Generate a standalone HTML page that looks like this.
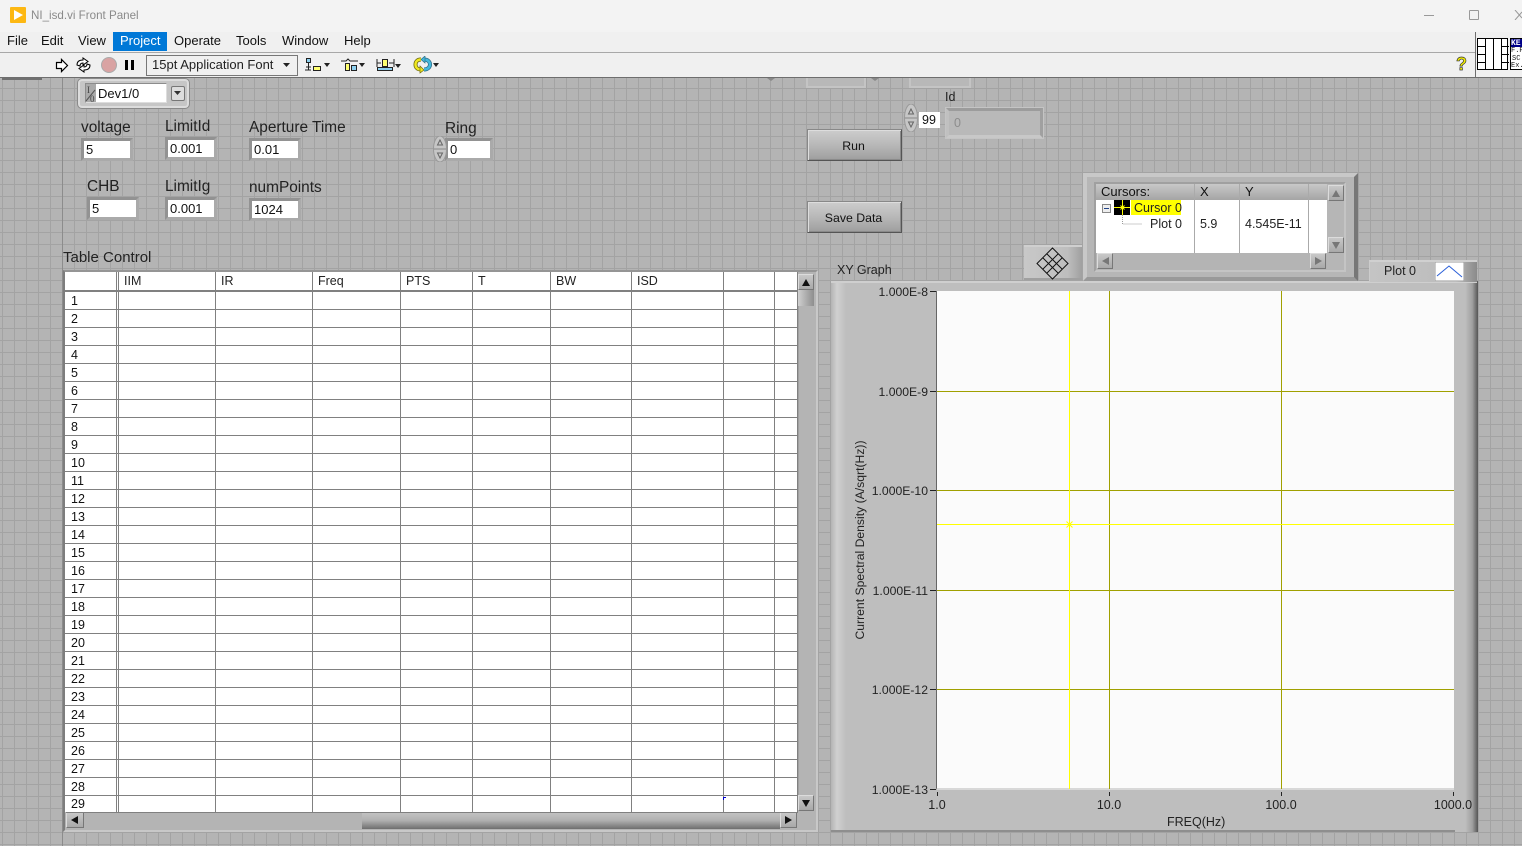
<!DOCTYPE html>
<html><head><meta charset="utf-8"><style>
html,body{margin:0;padding:0}
body{width:1522px;height:846px;overflow:hidden;position:relative;background:#b4b4b4;font-family:"Liberation Sans",sans-serif;color:#1a1a1a}
div,span,svg{position:absolute;box-sizing:border-box}
.t{white-space:nowrap;line-height:1}
.m{font-size:13px;top:34px;color:#111}
.l{font-size:15.4px;color:#222}
.f{background:#fff;border:0;font-size:13px;line-height:17px;padding-left:2px;color:#111}
.o{background:#b4b4b4;border:3px solid;border-color:#929292 #aaaaaa #aaaaaa #929292}
.c{font-size:12.5px;top:275px;color:#222}
.r{font-size:12.5px;left:71px;color:#111;white-space:nowrap;line-height:1}
.v{top:272px;width:1px;height:540px;background:#808080}
.y{font-size:12.2px;right:594px;white-space:nowrap;line-height:1;color:#222}
.x{font-size:12.5px;top:799px;width:60px;text-align:center;line-height:1;color:#222}
.b{background:linear-gradient(#c8c8c8,#a8a8a8);border:1px solid;border-color:#dcdcdc #777 #777 #dcdcdc}
.btn{background:linear-gradient(#cdcdcd,#b8b8b8 50%,#9e9e9e);border:1px solid #555;border-top-color:#888;border-left-color:#888;box-shadow:inset 1px 1px 0 #ddd,inset -1px -1px 0 #8a8a8a;font-size:12.3px;text-align:center;color:#111}
.h{background:linear-gradient(#c8c8c8,#a5a5a5);font-size:13px;line-height:16px;color:#111;padding-left:5px}
</style></head><body>
<div style="left:0;top:78px;width:1522px;height:768px;background-color:#b4b4b4;background-image:linear-gradient(90deg,#a3a3a3 1px,transparent 1px),linear-gradient(#a3a3a3 1px,transparent 1px);background-size:12px 12px;background-position:2px 10px"></div>
<div style="left:62px;top:78px;width:1px;height:768px;background:#8c8c8c"></div>

<!-- title bar -->
<div style="left:0;top:0;width:1522px;height:32px;background:#f3f3f3"></div>
<div style="left:0;top:32px;width:1522px;height:21px;background:#f0f0f0"></div>
<svg style="left:10px;top:7px" width="16" height="16"><rect width="16" height="16" rx="1" fill="#fdb813"/><path d="M4 3L13 8L4 13Z" fill="#fff"/></svg>
<span class="t" style="left:31px;top:10px;font-size:11.6px;color:#8a8a8a">NI_isd.vi Front Panel</span>
<div style="left:1424px;top:15px;width:10px;height:1px;background:#999"></div>
<div style="left:1469px;top:10px;width:10px;height:10px;border:1px solid #999;border-radius:1px"></div>
<svg style="left:1514px;top:10px" width="8" height="10"><path d="M1 0L8 8M1 10L8 2" stroke="#999" fill="none"/></svg>
<!-- menu -->
<div style="left:113px;top:32px;width:54px;height:19px;background:#0078d7"></div>
<span class="t m" style="left:7px">File</span>
<span class="t m" style="left:41px">Edit</span>
<span class="t m" style="left:78px">View</span>
<span class="t m" style="left:120px;color:#fff">Project</span>
<span class="t m" style="left:174px">Operate</span>
<span class="t m" style="left:236px">Tools</span>
<span class="t m" style="left:282px">Window</span>
<span class="t m" style="left:344px">Help</span>
<!-- toolbar -->
<div style="left:0;top:52px;width:1476px;height:1px;background:#a8a8a8"></div>
<div style="left:0;top:53px;width:1476px;height:24px;background:#f0f0f0"></div>
<div style="left:0;top:77px;width:1522px;height:1px;background:#6e6e6e"></div>
<div style="left:1476px;top:32px;width:46px;height:45px;background:#f0f0f0"></div>
<div style="left:1475px;top:32px;width:1px;height:46px;background:#6e6e6e"></div>
<div style="left:2px;top:78px;width:40px;height:2px;background:#707070"></div>
<svg style="left:55px;top:58px" width="14" height="15"><path d="M1.500 4.500H6.500V1.500L12.500 7.500L6.500 13.500V10.500H1.500Z" fill="#fff" stroke="#000" stroke-width="1.200"/></svg>
<svg style="left:75px;top:57px" width="17" height="16"><path d="M2 8C2 4 5 3 8 3V1L13 4.500L8 8V6C6 6 5 7 5 9Z" fill="#fff" stroke="#000"/><path d="M15 8C15 12 12 13 9 13V15L4 11.500L9 8V10C11 10 12 9 12 7Z" fill="#fff" stroke="#000"/></svg>
<div style="left:101px;top:57px;width:16px;height:16px;border-radius:50%;background:#d9a3a3;border:1.500px solid #aaa"></div>
<div style="left:125px;top:60px;width:3px;height:10px;background:#000"></div>
<div style="left:131px;top:60px;width:3px;height:10px;background:#000"></div>
<div style="left:146px;top:55px;width:152px;height:21px;border:1px solid #777;background:#f0f0f0"></div>
<span class="t" style="left:152px;top:58px;font-size:13px;color:#222">15pt Application Font</span>
<svg style="left:282px;top:62px" width="9" height="6"><path d="M1 1H8L4.500 5Z" fill="#222"/></svg>
<svg style="left:305px;top:57px" width="26" height="16"><rect x="1.500" y="1.500" width="4" height="4" fill="#8ed1f0" stroke="#222"/><path d="M3.500 6V13M1 10H6M0 13H6" stroke="#222"/><rect x="8.500" y="9.500" width="7" height="4" fill="#ffff70" stroke="#222"/><path d="M19 6H25L22 10Z" fill="#222"/></svg>
<svg style="left:340px;top:57px" width="26" height="16"><path d="M1 4H6L8 2L10 4H18" stroke="#222" fill="none"/><rect x="5.500" y="6.500" width="4" height="7" fill="#ffff70" stroke="#222"/><rect x="11.500" y="8.500" width="5" height="5" fill="#8ed1f0" stroke="#222"/><path d="M19 6H25L22 10Z" fill="#222"/></svg>
<svg style="left:376px;top:57px" width="26" height="16"><rect x="1.500" y="10.500" width="15" height="3" fill="#8ed1f0" stroke="#222"/><rect x="6.500" y="2.500" width="5" height="7" fill="#ffff70" stroke="#222"/><path d="M1 6H5M13 6H18M1 2V10M18 2V10" stroke="#222"/><path d="M19 7H25L22 11Z" fill="#222"/></svg>
<svg style="left:413px;top:56px" width="27" height="18"><path d="M8 3.500C4 3.500 2.500 6 2.500 8.500C2.500 11 4 13.500 8 13.500" fill="none" stroke="#6d6a10" stroke-width="4"/><path d="M8 3.500C4 3.500 2.500 6 2.500 8.500C2.500 11 4 13.500 8 13.500" fill="none" stroke="#f0e820" stroke-width="2.400"/><path d="M7 10L11 14L7 17Z" fill="#f0e820" stroke="#6d6a10" stroke-width=".7"/><path d="M11 3.500C15 3.500 17 6 17 8.500C17 11 15 13.500 11 13.500" fill="none" stroke="#2b6f8a" stroke-width="4"/><path d="M11 3.500C15 3.500 17 6 17 8.500C17 11 15 13.500 11 13.500" fill="none" stroke="#45b8dc" stroke-width="2.400"/><path d="M12 0L8 3.500L12 7Z" fill="#45b8dc" stroke="#2b6f8a" stroke-width=".7"/><path d="M20 7H26L23 11Z" fill="#222"/></svg>
<span class="t" style="left:1456px;top:55px;font-size:18px;font-weight:bold;color:#f5f000;-webkit-text-stroke:.7px #333">?</span>
<svg style="left:1477px;top:38px" width="32" height="32"><rect x=".5" y=".5" width="30" height="31" fill="#fff" stroke="#000"/><path d="M8.500 0V32M16.500 0V32M24.500 0V32M0 8.500H8M0 16.500H8M0 24.500H8M24 8.500H32M24 16.500H32M24 24.500H32" stroke="#000"/></svg>
<div style="left:1510px;top:38px;width:12px;height:32px;background:#fff;border:1px solid #000;border-right:0;overflow:hidden"><span class="t" style="left:0;top:0;width:12px;height:8px;background:#008;color:#fff;font:bold 8px 'Liberation Mono',monospace">KE</span><span class="t" style="left:0;top:8px;font:7px 'Liberation Mono',monospace">F.P</span><span class="t" style="left:1px;top:16px;font:7px 'Liberation Mono',monospace">SC</span><span class="t" style="left:0;top:23px;font:7px 'Liberation Mono',monospace">Ex.</span></div>

<!-- Dev box -->
<div style="left:78px;top:79px;width:111px;height:29px;background:#c6c6c6;border:2px solid #dcdcdc;border-radius:4px;box-shadow:0 0 0 1px #8a8a8a"></div>
<div style="left:85px;top:83px;width:82px;height:20px;background:#aaa;border:1px solid #8c8c8c;border-bottom-color:#ddd;border-right-color:#ddd"></div>
<svg style="left:85px;top:84px" width="12" height="19"><path d="M1 17L10 6" stroke="#555"/></svg>
<span class="t" style="left:87px;top:85px;font:9px 'Liberation Serif',serif;color:#444">I</span>
<span class="t" style="left:90px;top:94px;font:9px 'Liberation Serif',serif;color:#444">0</span>
<div class="f" style="left:96px;top:84px;width:70px;height:18px;padding-left:2px;line-height:20px;font-size:13px">Dev1/0</div>
<div style="left:171px;top:86px;width:14px;height:15px;background:#ddd;border:1px solid #777;border-radius:2px"></div>
<svg style="left:174px;top:91px" width="8" height="5"><path d="M0 0H7L3.500 4Z" fill="#333"/></svg>

<!-- Labels and fields -->
<span class="t l" style="left:81px;top:120px">voltage</span>
<span class="t l" style="left:165px;top:119px">LimitId</span>
<span class="t l" style="left:249px;top:120px">Aperture Time</span>
<span class="t l" style="left:445px;top:121px">Ring</span>
<span class="t l" style="left:87px;top:179px">CHB</span>
<span class="t l" style="left:165px;top:179px">LimitIg</span>
<span class="t l" style="left:249px;top:180px">numPoints</span>
<div class="o" style="left:81px;top:138px;width:52px;height:23px"></div><div class="f" style="left:84px;top:141px;width:46px;height:17px">5</div>
<div class="o" style="left:165px;top:137px;width:52px;height:23px"></div><div class="f" style="left:168px;top:140px;width:46px;height:17px">0.001</div>
<div class="o" style="left:249px;top:138px;width:52px;height:23px"></div><div class="f" style="left:252px;top:141px;width:46px;height:17px">0.01</div>
<div class="o" style="left:445px;top:138px;width:48px;height:23px"></div><div class="f" style="left:448px;top:141px;width:42px;height:17px">0</div>
<div class="o" style="left:87px;top:197px;width:52px;height:23px"></div><div class="f" style="left:90px;top:200px;width:46px;height:17px">5</div>
<div class="o" style="left:165px;top:197px;width:52px;height:23px"></div><div class="f" style="left:168px;top:200px;width:46px;height:17px">0.001</div>
<div class="o" style="left:249px;top:198px;width:52px;height:23px"></div><div class="f" style="left:252px;top:201px;width:46px;height:17px">1024</div>
<!-- spinner ring -->
<svg style="left:433px;top:136px" width="14" height="26"><ellipse cx="7" cy="13" rx="6.500" ry="13" fill="#c6c6c6" stroke="#999"/><path d="M1 13H13" stroke="#888"/><path d="M7 4L4.500 9H9.500Z M7 22L4.500 17H9.500Z" fill="none" stroke="#666"/></svg>

<!-- hidden controls at top -->
<div style="left:806px;top:78px;width:60px;height:10px;background:#b8b8b8;border:2px solid #c4c4c4;border-top:0"></div>
<div style="left:909px;top:78px;width:62px;height:10px;background:#b8b8b8;border:2px solid #c4c4c4;border-top:0"></div>
<svg style="left:767px;top:78px" width="8" height="4"><path d="M0 0L4 3L8 0" fill="#888"/></svg>
<svg style="left:871px;top:78px" width="8" height="4"><path d="M0 0L4 3L8 0" fill="#888"/></svg>
<!-- Id -->
<span class="t" style="left:945px;top:91px;font-size:12.500px;color:#222">Id</span>
<svg style="left:904px;top:104px" width="14" height="28"><ellipse cx="7" cy="14" rx="6.500" ry="14" fill="#c6c6c6" stroke="#999"/><path d="M1 14H13" stroke="#888"/><path d="M7 5L4.500 10H9.500Z M7 23L4.500 18H9.500Z" fill="none" stroke="#666"/></svg>
<div class="f" style="left:919px;top:112px;width:21px;height:16px;line-height:16px;font-size:12.500px;padding-left:3px">99</div>
<div style="left:945px;top:107px;width:99px;height:32px;background:#b9b9b9;border:4px solid;border-color:#9c9c9c #a0a0a0 #c8c8c8 #c0c0c0;outline:1px solid #c4c4c4;outline-offset:-1px"></div>
<span class="t" style="left:954px;top:117px;font-size:12.500px;color:#8d8d8d">0</span>
<!-- Buttons -->
<div class="btn" style="left:807px;top:129px;width:95px;height:32px;line-height:32px;padding-right:2px">Run</div>
<div class="btn" style="left:807px;top:201px;width:95px;height:32px;line-height:32px;padding-right:2px">Save Data</div>

<!-- Table -->
<span class="t l" style="left:63px;top:250px;font-size:15px">Table Control</span>
<div style="left:63px;top:270px;width:755px;height:562px;background:#b4b4b4;border:2px solid;border-color:#959595 #c8c8c8 #c8c8c8 #7d7d7d"></div>
<div style="left:65px;top:272px;width:733px;height:540px;overflow:hidden;background:#fff repeating-linear-gradient(transparent 0,transparent 17px,#808080 17px,#808080 18px);background-position:0 20px;background-repeat:repeat"></div>
<div style="left:65px;top:272px;width:733px;height:18px;background:#fff"></div>
<div style="left:65px;top:290px;width:733px;height:2px;background:#808080"></div>
<div class="v" style="left:116px"></div><div class="v" style="left:118px"></div>
<div class="v" style="left:215px"></div><div class="v" style="left:312px"></div><div class="v" style="left:400px"></div><div class="v" style="left:472px"></div><div class="v" style="left:550px"></div><div class="v" style="left:631px"></div><div class="v" style="left:723px"></div><div class="v" style="left:774px"></div>
<div style="left:797px;top:272px;width:1px;height:540px;background:#808080"></div>
<span class="t c" style="left:124px">IIM</span><span class="t c" style="left:221px">IR</span><span class="t c" style="left:318px">Freq</span><span class="t c" style="left:406px">PTS</span><span class="t c" style="left:478px">T</span><span class="t c" style="left:556px">BW</span><span class="t c" style="left:637px">ISD</span>
<span class="r" style="top:295px">1</span><span class="r" style="top:313px">2</span><span class="r" style="top:331px">3</span><span class="r" style="top:349px">4</span><span class="r" style="top:367px">5</span><span class="r" style="top:385px">6</span><span class="r" style="top:403px">7</span><span class="r" style="top:421px">8</span><span class="r" style="top:439px">9</span><span class="r" style="top:457px">10</span><span class="r" style="top:475px">11</span><span class="r" style="top:493px">12</span><span class="r" style="top:511px">13</span><span class="r" style="top:529px">14</span><span class="r" style="top:547px">15</span><span class="r" style="top:565px">16</span><span class="r" style="top:583px">17</span><span class="r" style="top:601px">18</span><span class="r" style="top:619px">19</span><span class="r" style="top:637px">20</span><span class="r" style="top:655px">21</span><span class="r" style="top:673px">22</span><span class="r" style="top:691px">23</span><span class="r" style="top:709px">24</span><span class="r" style="top:727px">25</span><span class="r" style="top:745px">26</span><span class="r" style="top:763px">27</span><span class="r" style="top:781px">28</span><span class="r" style="top:798px">29</span>
<div style="left:723px;top:797px;width:3px;height:1px;background:#00c"></div><div style="left:723px;top:797px;width:1px;height:3px;background:#00c"></div>
<!-- V scroll -->
<div class="b" style="left:798px;top:274px;width:16px;height:16px"></div>
<svg style="left:802px;top:279px" width="8" height="7"><path d="M4 0L8 7H0Z" fill="#111"/></svg>
<div style="left:798px;top:290px;width:16px;height:16px;background:linear-gradient(90deg,#cfcfcf,#8e8e8e)"></div>
<div style="left:798px;top:306px;width:1px;height:489px;background:#a0a0a0"></div>
<div class="b" style="left:798px;top:795px;width:16px;height:16px"></div>
<svg style="left:802px;top:800px" width="8" height="7"><path d="M0 0H8L4 7Z" fill="#111"/></svg>
<!-- H scroll -->
<div class="b" style="left:66px;top:812px;width:18px;height:16px"></div>
<svg style="left:71px;top:816px" width="7" height="8"><path d="M0 4L7 0V8Z" fill="#111"/></svg>
<div style="left:362px;top:812px;width:418px;height:17px;background:linear-gradient(#c4c4c4,#b0b0b0 50%,#6e6e6e)"></div>
<div class="b" style="left:780px;top:812px;width:17px;height:16px"></div>
<svg style="left:785px;top:816px" width="7" height="8"><path d="M7 4L0 0V8Z" fill="#111"/></svg>
<div style="left:66px;top:812px;width:732px;height:1px;background:#808080"></div>

<!-- Graph -->
<span class="t" style="left:837px;top:264px;font-size:12.500px;color:#222">XY Graph</span>
<div style="left:831px;top:281px;width:646px;height:551px;background:#bebebe;border-bottom:2px solid #8e8e8e"></div>
<div style="left:831px;top:281px;width:15px;height:549px;background:linear-gradient(90deg,#b4b4b4,#d0d0d0 40%,#bebebe)"></div>
<div style="left:1455px;top:281px;width:23px;height:551px;background:linear-gradient(90deg,#bebebe 45%,#a0a0a0 75%,#555)"></div>
<div style="left:831px;top:281px;width:646px;height:2px;background:#cfcfcf"></div>
<div style="left:936px;top:291px;width:518px;height:499px;background:#fbfbfb;border-left:1px solid #666;border-bottom:2px solid #d8d8d8"></div>
<div style="left:937px;top:391px;width:517px;height:1px;background:#a0a000"></div>
<div style="left:937px;top:490px;width:517px;height:1px;background:#a0a000"></div>
<div style="left:937px;top:590px;width:517px;height:1px;background:#a0a000"></div>
<div style="left:937px;top:689px;width:517px;height:1px;background:#a0a000"></div>
<div style="left:1109px;top:291px;width:1px;height:498px;background:#a0a000"></div>
<div style="left:1281px;top:291px;width:1px;height:498px;background:#a0a000"></div>
<div style="left:937px;top:524px;width:517px;height:1px;background:#ff0"></div>
<div style="left:1069px;top:291px;width:1px;height:498px;background:#ff0"></div>
<svg style="left:1066px;top:521px" width="7" height="7"><path d="M.5 .5L6.500 6.500M.5 6.500L6.500 .5" stroke="#ff0" fill="none"/></svg>
<span class="y" style="top:286px">1.000E-8</span><span class="y" style="top:386px">1.000E-9</span><span class="y" style="top:485px">1.000E-10</span><span class="y" style="top:585px">1.000E-11</span><span class="y" style="top:684px">1.000E-12</span><span class="y" style="top:784px">1.000E-13</span>
<div style="left:930px;top:291px;width:6px;height:1px;background:#222"></div><div style="left:930px;top:391px;width:6px;height:1px;background:#222"></div><div style="left:930px;top:490px;width:6px;height:1px;background:#222"></div><div style="left:930px;top:590px;width:6px;height:1px;background:#222"></div><div style="left:930px;top:689px;width:6px;height:1px;background:#222"></div><div style="left:930px;top:789px;width:6px;height:1px;background:#222"></div>
<div style="left:937px;top:792px;width:1px;height:4px;background:#222"></div><div style="left:1109px;top:792px;width:1px;height:4px;background:#222"></div><div style="left:1281px;top:792px;width:1px;height:4px;background:#222"></div><div style="left:1453px;top:792px;width:1px;height:4px;background:#222"></div>
<span class="x" style="left:907px">1.0</span><span class="x" style="left:1079px">10.0</span><span class="x" style="left:1251px">100.0</span><span class="x" style="left:1423px">1000.0</span>
<span class="t" style="left:1167px;top:816px;font-size:12.500px;color:#222">FREQ(Hz)</span>
<span class="t" style="left:860px;top:540px;font-size:12.200px;color:#222;transform:translate(-50%,-50%) rotate(-90deg)">Current Spectral Density (A/sqrt(Hz))</span>
<!-- legend -->
<div style="left:1369px;top:260px;width:108px;height:22px;background:linear-gradient(90deg,#c4c4c4,#bcbcbc 80%,#8a8a8a);border-top:2px solid #d0d0d0;border-left:1px solid #ccc"></div>
<span class="t" style="left:1384px;top:265px;font-size:12.500px;color:#222">Plot 0</span>
<svg style="left:1435px;top:262px" width="29" height="19"><rect width="29" height="19" fill="#fff" stroke="#999"/><path d="M2 14L14 4L27 15" stroke="#2a5fd8" fill="none"/></svg>

<!-- cursor palette -->
<div style="left:1083px;top:173px;width:275px;height:108px;background:#b6b6b6;border:4px solid;border-color:#c8c8c8 #777 #999 #c8c8c8"></div>
<div style="left:1094px;top:182px;width:252px;height:90px;border:2px solid;border-color:#a0a0a0 #c4c4c4 #c4c4c4 #a0a0a0"></div>
<div class="h" style="left:1096px;top:184px;width:98px;height:16px">Cursors:</div>
<div class="h" style="left:1195px;top:184px;width:44px;height:16px">X</div>
<div class="h" style="left:1240px;top:184px;width:68px;height:16px">Y</div>
<div class="h" style="left:1309px;top:184px;width:18px;height:16px"></div>
<div style="left:1096px;top:200px;width:231px;height:53px;background:#fff"></div>
<div style="left:1194px;top:184px;width:1px;height:69px;background:#aaa"></div>
<div style="left:1239px;top:184px;width:1px;height:69px;background:#aaa"></div>
<div style="left:1308px;top:184px;width:1px;height:69px;background:#aaa"></div>
<div style="left:1102px;top:204px;width:9px;height:9px;background:#eee;border:1px solid #888"></div><div style="left:1104px;top:208px;width:5px;height:1px;background:#248"></div>
<svg style="left:1114px;top:200px" width="16" height="15"><rect width="16" height="15" fill="#000"/><path d="M0 7.500H16M8.500 0V15" stroke="#ff0"/><path d="M6.500 5.500L10.500 9.500M6.500 9.500L10.500 5.500" stroke="#ff0"/></svg>
<div style="left:1131px;top:200px;width:50px;height:15px;background:#ff0"></div>
<span class="t" style="left:1134px;top:202px;font-size:12.500px;color:#222">Cursor 0</span>
<svg style="left:1122px;top:215px" width="20" height="12"><path d="M.5 0V9H20" stroke="#999" stroke-dasharray="1 1" fill="none"/></svg>
<span class="t" style="left:1150px;top:218px;font-size:12.500px;color:#222">Plot 0</span>
<span class="t" style="left:1200px;top:218px;font-size:12.500px;color:#222">5.9</span>
<span class="t" style="left:1245px;top:218px;font-size:12.500px;color:#222">4.545E-11</span>
<div style="left:1096px;top:253px;width:231px;height:17px;background:#b4b4b4"></div>
<div class="b" style="left:1328px;top:185px;width:16px;height:16px"></div><svg style="left:1332px;top:190px" width="8" height="7"><path d="M4 0L8 7H0Z" fill="#777"/></svg>
<div class="b" style="left:1328px;top:237px;width:16px;height:16px"></div><svg style="left:1332px;top:242px" width="8" height="7"><path d="M0 0H8L4 7Z" fill="#777"/></svg>
<div class="b" style="left:1097px;top:253px;width:16px;height:16px"></div><svg style="left:1102px;top:257px" width="7" height="8"><path d="M0 4L7 0V8Z" fill="#777"/></svg>
<div class="b" style="left:1310px;top:253px;width:16px;height:16px"></div><svg style="left:1315px;top:257px" width="7" height="8"><path d="M7 4L0 0V8Z" fill="#777"/></svg>
<!-- diamond -->
<div style="left:1024px;top:245px;width:58px;height:35px;background:linear-gradient(90deg,#c8c8c8,#bebebe 75%,#a0a0a0);border-top:2px solid #cfcfcf;border-bottom:2px solid #a0a0a0"></div>
<svg style="left:1036px;top:247px" width="33" height="33"><path d="M16.500 1L32 16.500L16.500 32L1 16.500ZM10.500 6.500L26.500 22.500M6.500 10.500L22.500 26.500M22.500 6.500L6.500 22.500M26.500 10.500L10.500 26.500" fill="none" stroke="#111"/></svg>
</body></html>
